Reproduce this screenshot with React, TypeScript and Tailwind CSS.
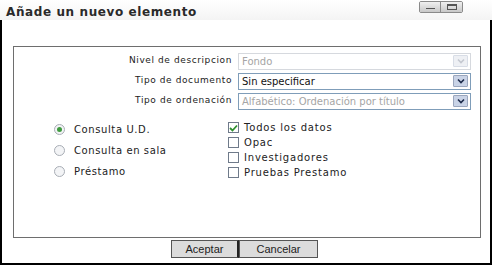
import type { ReactNode } from "react";

function Arrow({ disabled }: { disabled?: boolean }) {
  return (
    <span
      className={`flex h-[12px] w-[15px] items-center justify-center rounded-[1px] border ${
        disabled ? "border-[#d8dde6] bg-[#eef0f4]" : "border-[#9aa6bd] bg-[#c9d3e6]"
      }`}
    >
      <svg width="8" height="6" viewBox="0 0 8 6">
        <path d="M1 1.5 L4 4.5 L7 1.5" fill="none" stroke={disabled ? "#c4c8d0" : "#1c2a4a"} strokeWidth="1.6" />
      </svg>
    </span>
  );
}

function Field({ label, value, muted, disabled }: { label: string; value: string; muted?: boolean; disabled?: boolean }) {
  return (
    <div className="flex h-[20px] items-center">
      <span className="w-[220px] pr-[6px] text-right text-[9px] tracking-[0.6px] text-[#222]">{label}</span>
      <div
        className={`flex h-[17px] w-[233px] items-center justify-between border pl-[3px] pr-[2px] ${
          disabled ? "border-[#d6d9de]" : "border-[#7f9db9]"
        }`}
      >
        <span className={`text-[10px] ${muted ? "text-[#a5a5a5]" : "text-[#111]"}`}>{value}</span>
        <Arrow disabled={disabled} />
      </div>
    </div>
  );
}

function Radio({ checked, children }: { checked?: boolean; children: ReactNode }) {
  return (
    <div className="flex h-[21px] items-center">
      <span className="flex h-[11px] w-[11px] items-center justify-center rounded-full border border-[#a8adb5] bg-[#f3f4f6]">
        {checked && <span className="h-[5px] w-[5px] rounded-full bg-[#3f9a3f]" />}
      </span>
      <span className="ml-[9px] text-[10px] tracking-[0.6px] text-[#222]">{children}</span>
    </div>
  );
}

function Check({ checked, children }: { checked?: boolean; children: ReactNode }) {
  return (
    <div className="flex h-[15px] items-center">
      <span className="flex h-[11px] w-[11px] items-center justify-center border border-[#6f7a8a] bg-white">
        {checked && (
          <svg width="9" height="8" viewBox="0 0 9 8">
            <path d="M1 4 L3.5 6.5 L8 1.5" fill="none" stroke="#2f8f2f" strokeWidth="1.8" />
          </svg>
        )}
      </span>
      <span className="ml-[5px] text-[10px] tracking-[0.8px] text-[#222]">{children}</span>
    </div>
  );
}

export default function App() {
  return (
    <div
      className="flex h-[265px] w-[492px] flex-col overflow-hidden bg-white"
      style={{ fontFamily: '"DejaVu Sans", Verdana, sans-serif' }}
    >
      <div className="flex h-[20px] items-start justify-between bg-gradient-to-b from-white to-[#f4f4f4] pl-[6px]">
        <span className="mt-[3px] text-[12px] font-bold tracking-[0.6px] text-[#2a2a2a]">Añade un nuevo elemento</span>
        <div className="mr-[29px] mt-[1px] flex h-[12px] overflow-hidden rounded-[2px] border border-[#8a8a8a]">
          <span className="flex w-[21px] items-center justify-center border-r border-[#8a8a8a] bg-gradient-to-b from-[#f0f0f0] to-[#c8c8c8]">
            <span className="mt-[2px] h-[1px] w-[9px] bg-[#555]" />
          </span>
          <span className="flex w-[21px] items-center justify-center bg-gradient-to-b from-[#f0f0f0] to-[#c8c8c8]">
            <span className="h-[6px] w-[10px] border border-t-2 border-[#555]" />
          </span>
        </div>
      </div>

      <div className="flex flex-1 flex-col border-x-2 border-b-2 border-black">
        <div className="ml-[11px] mt-[26px] h-[192px] w-[468px] border border-[#6e6e6e] pl-[4px] pt-[4px]">
          <Field label="Nivel de descripcion" value="Fondo" muted disabled />
          <Field label="Tipo de documento" value="Sin especificar" />
          <Field label="Tipo de ordenación" value="Alfabético: Ordenación por título" muted />

          <div className="mt-[8px] flex">
            <div className="ml-[36px] w-[174px]">
              <Radio checked>Consulta U.D.</Radio>
              <Radio>Consulta en sala</Radio>
              <Radio>Préstamo</Radio>
            </div>
            <div className="mt-[1px]">
              <Check checked>Todos los datos</Check>
              <Check>Opac</Check>
              <Check>Investigadores</Check>
              <Check>Pruebas Prestamo</Check>
            </div>
          </div>
        </div>

        <div className="mt-[2px] flex justify-center pr-[3px]">
          <button className="h-[18px] w-[68px] border border-[#555] border-r-2 border-r-[#222] bg-[#dcdcdc] text-[11px] text-[#222]" style={{ fontFamily: '"Liberation Sans", Arial, sans-serif' }}>
            Aceptar
          </button>
          <button className="h-[18px] w-[79px] border border-[#555] bg-[#dcdcdc] text-[11px] text-[#222]" style={{ fontFamily: '"Liberation Sans", Arial, sans-serif' }}>
            Cancelar
          </button>
        </div>
      </div>
    </div>
  );
}
